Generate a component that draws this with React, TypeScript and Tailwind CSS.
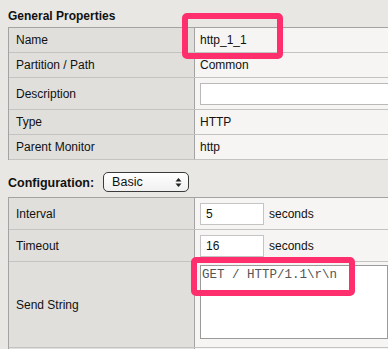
import React from 'react';

// property sheet: label column + value column, rows with thin dividers
interface Row {
  label: string;
  h: string;
  children?: React.ReactNode;
}

const Sheet: React.FC<{ rows: Row[] }> = ({ rows }) => (
  <div className="ml-2 w-[440px] border-t border-l border-[#a3a3a3]">
    {rows.map((r) => (
      <div key={r.label} className={`flex border-b border-[#c3c3c1] ${r.h}`}>
        <div className="w-[186px] shrink-0 flex items-center pl-[7px] bg-[#e0dfdc] border-r border-[#a3a3a3]">
          {r.label}
        </div>
        <div className="flex-1 bg-[#f6f5f3] pl-[5px]">{r.children}</div>
      </div>
    ))}
  </div>
);

const Text: React.FC<{ children: React.ReactNode }> = ({ children }) => (
  <div className="h-full flex items-center">{children}</div>
);

const SelectArrows = () => (
  <svg width="7" height="11" viewBox="0 0 7 11">
    <path d="M3.5 1 L6.5 4.5 H0.5 Z" fill="#222" />
    <path d="M3.5 10 L6.5 6.5 H0.5 Z" fill="#222" />
  </svg>
);

export default function App() {
  return (
    <div
      className="relative w-[388px] h-[349px] overflow-hidden bg-[#e8e7e3] text-[12px] text-[#111]"
      style={{ fontFamily: '"Liberation Sans", Arial, sans-serif' }}
    >
      {/* General Properties */}
      <div className="pt-[9px] pl-2 h-[27px] font-bold leading-[15px]">General Properties</div>
      <Sheet
        rows={[
          { label: 'Name', h: 'h-[25px]', children: <Text>http_1_1</Text> },
          { label: 'Partition / Path', h: 'h-[25px]', children: <Text>Common</Text> },
          {
            label: 'Description',
            h: 'h-[32px]',
            children: (
              <div className="pt-[5px]">
                <div className="h-[22px] w-[260px] bg-white border border-[#b9b9b9]" />
              </div>
            ),
          },
          { label: 'Type', h: 'h-[25px]', children: <Text>HTTP</Text> },
          { label: 'Parent Monitor', h: 'h-[25px]', children: <Text>http</Text> },
        ]}
      />

      {/* Configuration */}
      <div className="flex items-center h-[37px] pl-2 pt-[7px]">
        <span className="font-bold text-[12.5px] mr-[9px] mt-[2px]">Configuration:</span>
        <div className="w-[86px] h-[20px] flex items-center justify-between pl-[8px] pr-[6px] border border-[#3a3a3a] rounded-[5px] bg-gradient-to-b from-white to-[#f0f0f0] text-[12.5px]">
          <span>Basic</span>
          <SelectArrows />
        </div>
      </div>
      <Sheet
        rows={[
          {
            label: 'Interval',
            h: 'h-[32px]',
            children: (
              <div className="flex items-center h-full gap-[5px]">
                <div className="w-[64px] h-[22px] bg-white border border-[#c4c4c4] flex items-center pl-[5px]">5</div>
                <span>seconds</span>
              </div>
            ),
          },
          {
            label: 'Timeout',
            h: 'h-[32px]',
            children: (
              <div className="flex items-center h-full gap-[5px]">
                <div className="w-[64px] h-[22px] bg-white border border-[#c4c4c4] flex items-center pl-[5px]">16</div>
                <span>seconds</span>
              </div>
            ),
          },
          {
            label: 'Send String',
            h: 'h-[86px]',
            children: (
              <div className="pt-[3px]">
                <div
                  className="h-[74px] w-[188px] bg-white border border-[#9a9a9a] px-[1px] pt-[2px] text-[12.5px] leading-[15px] text-[#555]"
                  style={{ fontFamily: '"Courier New", "Liberation Mono", monospace' }}
                >
                  GET / HTTP/1.1\r\n
                </div>
              </div>
            ),
          },
          { label: ' ', h: 'h-[20px]' },
        ]}
      />

      {/* highlight boxes */}
      <div className="absolute left-[182px] top-[13px] w-[101px] h-[46px] border-[6px] border-[#fe2f6c] rounded-[5px]" />
      <div className="absolute left-[191px] top-[257px] w-[164px] h-[39px] border-[6px] border-[#fe2f6c] rounded-[5px]" />
    </div>
  );
}
